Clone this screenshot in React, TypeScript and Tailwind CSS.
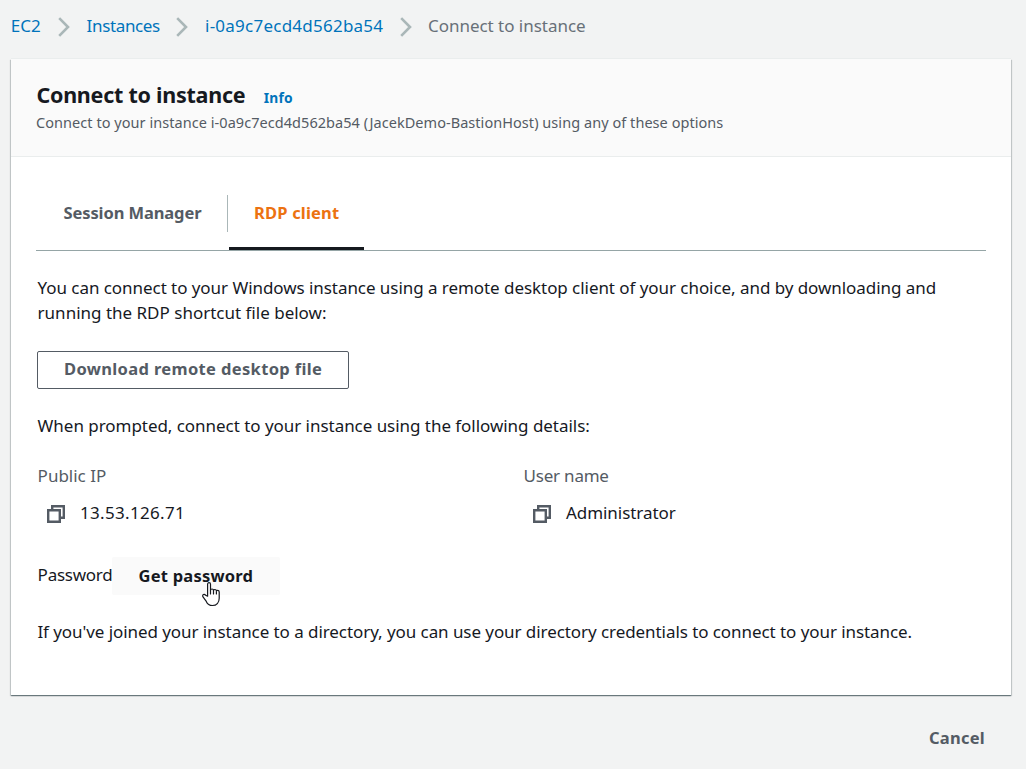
function Chevron() {
  return (
    <svg width="12" height="20" viewBox="0 0 12 20" className="shrink-0" fill="none" stroke="#aab7b8" strokeWidth="2.6">
      <path d="M1.2 1.2 10 10l-8.8 8.8" />
    </svg>
  );
}

function CopyIcon() {
  return (
    <svg width="18" height="18" viewBox="0 0 18 18" className="mt-[5px] shrink-0" fill="none" stroke="#545b64" strokeWidth="2.4">
      <path d="M5.2 5.2V1.2h11.600v11.600h-4" />
      <path d="M1.2 5.2h11.600v11.600H1.2z" />
    </svg>
  );
}

function HandCursor() {
  return (
    <svg width="19" height="25" viewBox="0 0 19 25" className="absolute left-[90px] top-[25px]" fill="#fff" stroke="#16191f" strokeWidth="1.2" strokeLinejoin="round" strokeLinecap="round">
      <path d="M5.6 14.2V2.3C5.6 1.2 6.2.7 7 .7s1.5.5 1.5 1.6v5.9c.2-.8.8-1.2 1.5-1.2.9 0 1.5.5 1.5 1.4.2-.6.7-.9 1.4-.9.9 0 1.5.6 1.5 1.5.2-.4.7-.6 1.2-.6.9 0 1.6.6 1.6 1.7v6.2c0 4.3-2.7 7.2-6.7 7.2-3.2 0-5-1.2-6.2-4.1L1 14.9c-.5-1.1-.3-2 .4-2.4.8-.4 1.7 0 2.3.8z" />
      <path d="M8.5 8v4M11.5 8.5V12M14.4 9.5V12" fill="none" />
    </svg>
  );
}

function Detail({ label, value, labelClass, valueClass }: { label: string; value: string; labelClass: string; valueClass: string }) {
  return (
    <div>
      <div className={`pl-[0.6px] text-[#545b64] ${labelClass}`}>{label}</div>
      <div className="mt-3 flex pl-[10px]">
        <CopyIcon />
        <span className={`ml-[15px] ${valueClass}`}>{value}</span>
      </div>
    </div>
  );
}

export default function App() {
  return (
    <div className="flex h-[769px] w-[1026px] flex-col overflow-hidden whitespace-nowrap bg-[#f2f3f3] font-['Noto_Sans',sans-serif] text-[17px] leading-[25px] text-[#16191f]">
      <nav className="flex h-[59px] items-start pl-[10px] pt-[13px] text-[#0073bb]">
        <a className="w-[48px] pl-[0.7px]">EC2</a>
        <div className="mt-[4px]"><Chevron /></div>
        <a className="ml-4 w-[90px] pl-[0.6px] tracking-[-0.36px]">Instances</a>
        <div className="mt-[4px]"><Chevron /></div>
        <a className="ml-[17px] w-[195px] tracking-[0.24px]">i-0a9c7ecd4d562ba54</a>
        <div className="mt-[4px]"><Chevron /></div>
        <span className="ml-4 tracking-[-0.03px] text-[#687078]">Connect to instance</span>
      </nav>

      <main className="ml-[11px] h-[636px] w-[1000px] shrink-0 bg-white shadow-[0_1px_1px_0_rgba(0,28,36,0.4),1px_1px_1px_0_rgba(0,28,36,0.15),-1px_1px_1px_0_rgba(0,28,36,0.15),0_-1px_0_0_#eaeded]">
        <header className="h-[98px] border-b border-[#eaeded] bg-[#fafafa] pl-[25px] pt-[21px]">
          <div className="flex h-[29px] items-baseline leading-[30px]">
            <h1 className="w-[227px] pl-[0.4px] text-[21.5px] font-bold tracking-[-0.25px]">Connect to instance</h1>
            <a className="pl-[0.7px] text-[13.8px] font-bold tracking-[0.2px] text-[#0073bb]">Info</a>
          </div>
          <p className="mt-[2px] text-[14.5px] leading-[22px] tracking-[0.05px] text-[#545b64]">
            Connect to your instance i-0a9c7ecd4d562ba54 (JacekDemo-BastionHost) using any of these options
          </p>
        </header>

        <div className="px-[25px] pt-[38px]">
          <div className="flex h-[56px] items-start border-b border-[#95a5a6] text-[16.5px] font-bold">
            <div className="h-[37px] w-[192px] border-r border-[#aab7b8] pl-[27.5px] pt-[5px] tracking-[-0.1px] text-[#545b64]">Session Manager</div>
            <div className="ml-px h-[55px] w-[135px] border-b-[3px] border-[#16191f] pl-[25px] pt-[5px] tracking-[0.18px] text-[#ec7211]">RDP client</div>
          </div>

          <div className="pl-px pt-6">
            <p className="pl-[0.6px] tracking-[-0.055px]">You can connect to your Windows instance using a remote desktop client of your choice, and by downloading and</p>
            <p className="pl-[0.6px]">running the RDP shortcut file below:</p>
            <button className="mt-[26px] block h-[38px] w-[312px] rounded-[2px] border border-[#545b64] pb-[3px] pl-[26px] text-left text-[16.5px] font-bold leading-[34px] tracking-[0.35px] text-[#545b64]">
              Download remote desktop file
            </button>
            <p className="mt-6 pl-[0.6px] tracking-[-0.04px]">When prompted, connect to your instance using the following details:</p>

            <div className="mt-[25px] grid grid-cols-[486px_1fr]">
              <Detail label="Public IP" value="13.53.126.71" labelClass="tracking-[0px]" valueClass="tracking-[0.32px]" />
              <Detail label="User name" value="Administrator" labelClass="tracking-[-0.22px]" valueClass="tracking-[-0.06px]" />
            </div>

            <div className="mt-8 flex h-[38px]">
              <span className="w-[75px] pl-[0.6px] pt-[5px] tracking-[-0.25px]">Password</span>
              <button className="relative h-[38px] w-[168px] rounded-[2px] bg-[#fafafa] pb-[2px] pl-[26.5px] text-left text-[16.5px] font-bold tracking-[0.22px]">
                Get password
                <HandCursor />
              </button>
            </div>
            <p className="mt-6 pl-[0.4px] tracking-[-0.068px]">If you've joined your instance to a directory, you can use your directory credentials to connect to your instance.</p>
          </div>
        </div>
      </main>

      <footer className="flex justify-end pr-[41px] pt-[30px]">
        <button className="text-[16.5px] font-bold tracking-[0.26px] text-[#545b64]">Cancel</button>
      </footer>
    </div>
  );
}
